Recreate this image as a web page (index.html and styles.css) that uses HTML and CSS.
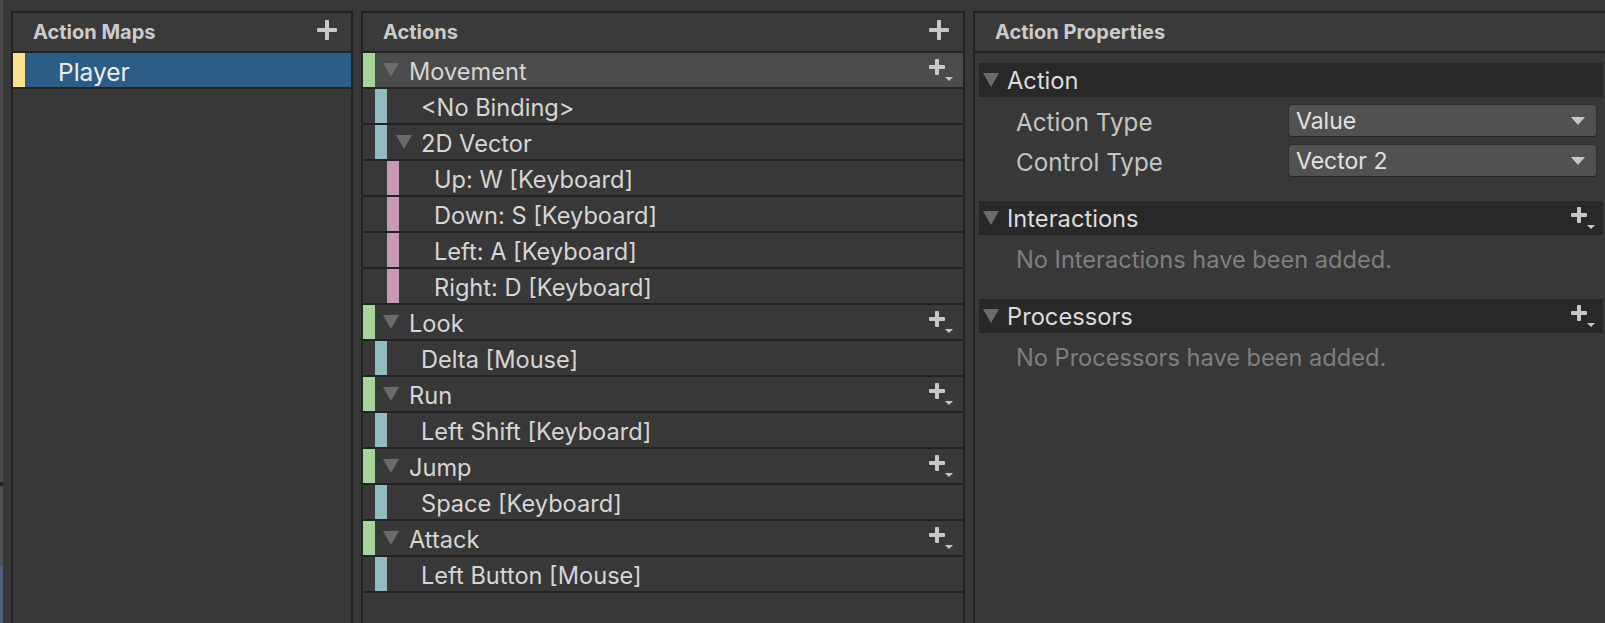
FILE: index.html
```html
<!DOCTYPE html>
<html lang="en">
<head>
<meta charset="utf-8">
<title>Input Actions</title>
<link rel="stylesheet" href="styles.css">
</head>
<body>
<div class="window">
  <div class="edge"></div>
  <div class="panels">
    <section class="panel maps">
      <header class="panel-head">
        <span class="title">Action Maps</span>
        <svg class="plus" viewBox="0 0 20 20" width="20" height="20"><rect x="0" y="8" width="20" height="4" rx="1"/><rect x="8" y="0" width="4" height="20" rx="1"/></svg>
      </header>
      <div class="list">
        <div class="row selected">
          <span class="bar yellow"></span>
          <span class="label map-label">Player</span>
        </div>
      </div>
    </section>

    <section class="panel actions">
      <header class="panel-head">
        <span class="title">Actions</span>
        <svg class="plus" viewBox="0 0 20 20" width="20" height="20"><rect x="0" y="8" width="20" height="4" rx="1"/><rect x="8" y="0" width="4" height="20" rx="1"/></svg>
      </header>
      <div class="list">
        <div class="row action active">
          <span class="bar green"></span>
          <span class="tog"><i class="tri"></i></span>
          <span class="label">Movement</span>
          <svg class="add" viewBox="0 0 24 22" width="24" height="22"><rect x="0" y="6" width="16" height="4" rx="1"/><rect x="6" y="0" width="4" height="16" rx="1"/><path d="M16 18h8l-4 4z"/></svg>
        </div>
        <div class="row binding">
          <span class="bar teal"></span>
          <span class="tog"></span>
          <span class="label">&lt;No Binding&gt;</span>
        </div>
        <div class="row binding">
          <span class="bar teal"></span>
          <span class="tog"><i class="tri"></i></span>
          <span class="label">2D Vector</span>
        </div>
        <div class="row part">
          <span class="bar pink"></span>
          <span class="tog"></span>
          <span class="label">Up: W [Keyboard]</span>
        </div>
        <div class="row part">
          <span class="bar pink"></span>
          <span class="tog"></span>
          <span class="label">Down: S [Keyboard]</span>
        </div>
        <div class="row part">
          <span class="bar pink"></span>
          <span class="tog"></span>
          <span class="label">Left: A [Keyboard]</span>
        </div>
        <div class="row part">
          <span class="bar pink"></span>
          <span class="tog"></span>
          <span class="label">Right: D [Keyboard]</span>
        </div>
        <div class="row action">
          <span class="bar green"></span>
          <span class="tog"><i class="tri"></i></span>
          <span class="label">Look</span>
          <svg class="add" viewBox="0 0 24 22" width="24" height="22"><rect x="0" y="6" width="16" height="4" rx="1"/><rect x="6" y="0" width="4" height="16" rx="1"/><path d="M16 18h8l-4 4z"/></svg>
        </div>
        <div class="row binding">
          <span class="bar teal"></span>
          <span class="tog"></span>
          <span class="label">Delta [Mouse]</span>
        </div>
        <div class="row action">
          <span class="bar green"></span>
          <span class="tog"><i class="tri"></i></span>
          <span class="label">Run</span>
          <svg class="add" viewBox="0 0 24 22" width="24" height="22"><rect x="0" y="6" width="16" height="4" rx="1"/><rect x="6" y="0" width="4" height="16" rx="1"/><path d="M16 18h8l-4 4z"/></svg>
        </div>
        <div class="row binding">
          <span class="bar teal"></span>
          <span class="tog"></span>
          <span class="label">Left Shift [Keyboard]</span>
        </div>
        <div class="row action">
          <span class="bar green"></span>
          <span class="tog"><i class="tri"></i></span>
          <span class="label">Jump</span>
          <svg class="add" viewBox="0 0 24 22" width="24" height="22"><rect x="0" y="6" width="16" height="4" rx="1"/><rect x="6" y="0" width="4" height="16" rx="1"/><path d="M16 18h8l-4 4z"/></svg>
        </div>
        <div class="row binding">
          <span class="bar teal"></span>
          <span class="tog"></span>
          <span class="label">Space [Keyboard]</span>
        </div>
        <div class="row action">
          <span class="bar green"></span>
          <span class="tog"><i class="tri"></i></span>
          <span class="label">Attack</span>
          <svg class="add" viewBox="0 0 24 22" width="24" height="22"><rect x="0" y="6" width="16" height="4" rx="1"/><rect x="6" y="0" width="4" height="16" rx="1"/><path d="M16 18h8l-4 4z"/></svg>
        </div>
        <div class="row binding">
          <span class="bar teal"></span>
          <span class="tog"></span>
          <span class="label">Left Button [Mouse]</span>
        </div>
      </div>
    </section>

    <section class="panel props">
      <header class="panel-head">
        <span class="title">Action Properties</span>
      </header>
      <div class="props-body">
        <div class="fold">
          <i class="tri"></i>
          <span class="fold-title">Action</span>
        </div>
        <div class="field">
          <span class="field-label">Action Type</span>
          <div class="dropdown"><span>Value</span><svg viewBox="0 0 14 8" width="14" height="8"><path d="M0 0h14l-7 8z"/></svg></div>
        </div>
        <div class="field">
          <span class="field-label">Control Type</span>
          <div class="dropdown"><span>Vector 2</span><svg viewBox="0 0 14 8" width="14" height="8"><path d="M0 0h14l-7 8z"/></svg></div>
        </div>
        <div class="fold sep">
          <i class="tri"></i>
          <span class="fold-title">Interactions</span>
          <svg class="add" viewBox="0 0 24 22" width="24" height="22"><rect x="0" y="6" width="16" height="4" rx="1"/><rect x="6" y="0" width="4" height="16" rx="1"/><path d="M16 18h8l-4 4z"/></svg>
        </div>
        <div class="empty">No Interactions have been added.</div>
        <div class="fold">
          <i class="tri"></i>
          <span class="fold-title">Processors</span>
          <svg class="add" viewBox="0 0 24 22" width="24" height="22"><rect x="0" y="6" width="16" height="4" rx="1"/><rect x="6" y="0" width="4" height="16" rx="1"/><path d="M16 18h8l-4 4z"/></svg>
        </div>
        <div class="empty">No Processors have been added.</div>
      </div>
    </section>
  </div>
</div>
</body>
</html>
```

FILE: styles.css
```css
* { box-sizing: border-box; }

html, body {
  margin: 0;
  padding: 0;
}

body {
  width: 1605px;
  height: 623px;
  overflow: hidden;
  background: #383838;
  font-family: Inter, "Noto Sans", sans-serif;
  color: #d6d6d6;
}

.window {
  display: flex;
  height: 623px;
}

.edge {
  flex: none;
  width: 3px;
  margin-right: 8px;
  background: linear-gradient(to bottom, #4a4a4a 0, #4a4a4a 482px, #262626 482px, #262626 486px, #505050 486px, #505050 566px, #51617f 566px, #51617f 100%);
}

.panels {
  display: flex;
  gap: 8px;
  padding-top: 11px;
  height: 100%;
}

.panel {
  display: flex;
  flex-direction: column;
  height: 100%;
  border: 2px solid #232323;
  border-bottom: none;
  background: #383838;
  overflow: hidden;
  flex: none;
}

.maps { width: 342px; }
.actions { width: 604px; }
.props { width: 634px; }

.panel-head {
  flex: none;
  height: 40px;
  border-bottom: 2px solid #232323;
  display: flex;
  align-items: center;
  justify-content: space-between;
  padding: 0 14px 0 20px;
  background: #3a3a3a;
}

.title {
  font-size: 20px;
  font-weight: 700;
  color: #cbcbcb;
}

.plus {
  fill: #c8c8c8;
  margin-top: -5px;
}

.list {
  display: flex;
  flex-direction: column;
}

.row {
  flex: none;
  height: 36px;
  border-bottom: 2px solid #232323;
  display: flex;
  align-items: center;
  background: #383838;
}

.row.active { background: #4b4b4b; }
.row.selected { background: #2c5d87; }

.bar {
  align-self: stretch;
  width: 12px;
  flex: none;
}

.yellow { background: #fde28d; }
.green { background: #a6d49a; }
.teal { background: #93bcc1; margin-left: 12px; }
.pink { background: #c999b5; margin-left: 24px; }

.tog {
  flex: none;
  width: 34px;
  padding-left: 8px;
  display: flex;
  align-items: center;
}

.binding .tog {
  width: 34px;
  padding-left: 9px;
}

.part .tog { width: 35px; }

.tri {
  display: block;
  width: 0;
  height: 0;
  border-left: 8px solid transparent;
  border-right: 8px solid transparent;
  border-top: 14px solid #6b6b6b;
}

.label {
  font-size: 23.6px;
  line-height: 28px;
  padding-top: 3px;
  white-space: nowrap;
}

.map-label {
  margin-left: 33px;
  font-size: 24.5px;
  color: #ededed;
}

.add {
  flex: none;
  margin-left: auto;
  margin-right: 10px;
  fill: #c8c8c8;
}

.props-body {
  display: flex;
  flex-direction: column;
  padding: 10px 2px 0 4px;
}

.fold {
  flex: none;
  height: 34px;
  background: #282828;
  display: flex;
  align-items: center;
  padding-left: 4px;
}

.fold .tri { margin-right: 8px; }

.fold .add { margin-right: 8px; }

.fold-title {
  font-size: 23.7px;
  color: #dcdcdc;
  white-space: nowrap;
}

.field {
  flex: none;
  height: 33px;
  margin-top: 7px;
  display: flex;
  align-items: center;
  padding-left: 37px;
}

.field-label {
  flex: 1;
  padding-top: 4px;
  font-size: 24.2px;
  color: #c4c4c4;
  white-space: nowrap;
}

.dropdown {
  flex: none;
  width: 309px;
  height: 33px;
  margin-right: 6px;
  display: flex;
  align-items: center;
  justify-content: space-between;
  padding: 0 11px 0 7px;
  background: #515151;
  border: 1px solid #2e2e2e;
  border-bottom-color: #242424;
  border-radius: 4px;
  font-size: 23px;
  color: #e2e2e2;
}

.dropdown svg { fill: #c8c8c8; }

.sep { margin-top: 24px; }

.empty {
  flex: none;
  padding: 9px 0 23px 37px;
  line-height: 32px;
  font-size: 23.6px;
  color: #7f7f7f;
  white-space: nowrap;
}
```
